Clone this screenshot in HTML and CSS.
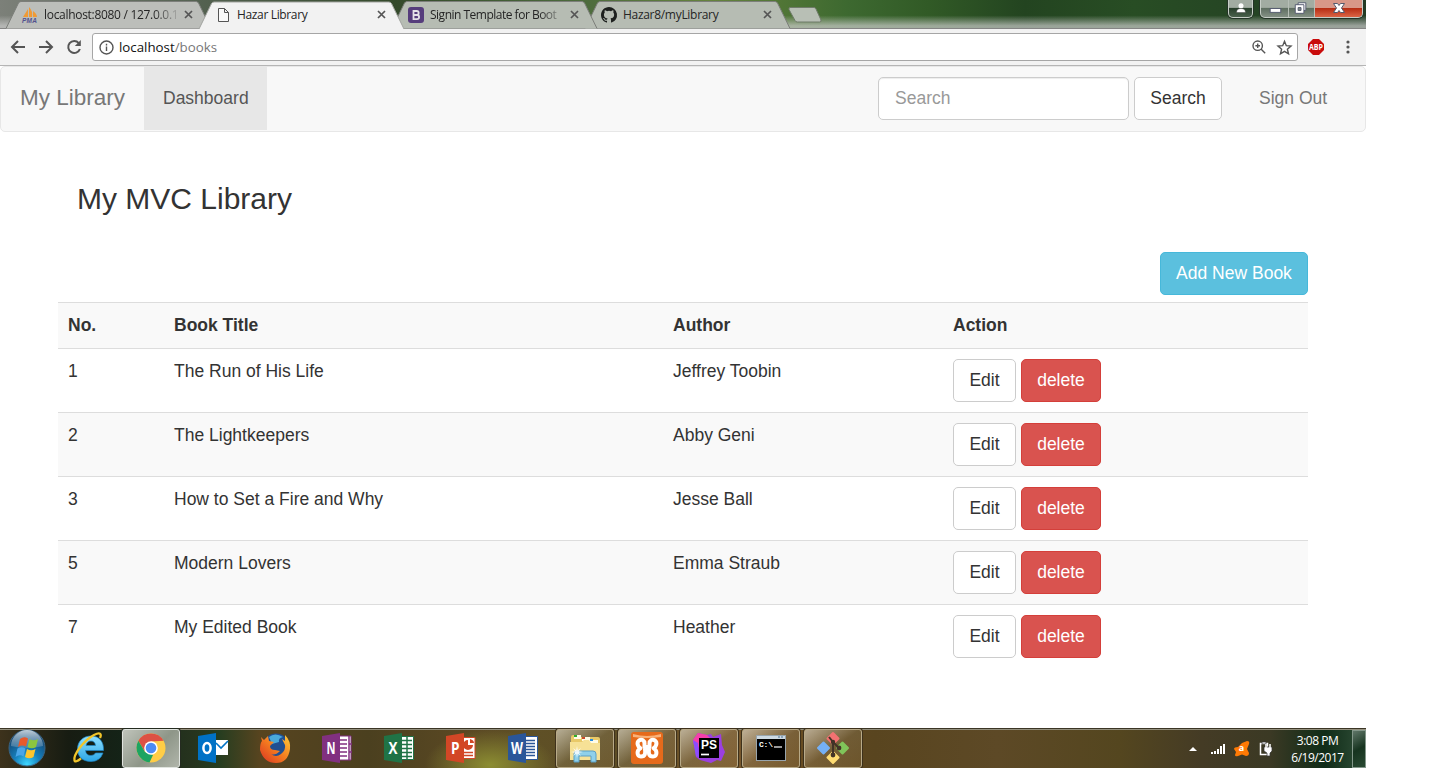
FILE: index.html
```html
<!DOCTYPE html>
<html lang="en">
<head>
<meta charset="utf-8">
<title>Hazar Library</title>
<link rel="stylesheet" href="styles.css">
</head>
<body>
<div class="desktop">
  <header class="strip">
    <div class="tabs">
      <div class="tab t1">
        <svg class="shape" viewBox="0 0 205 28"><path d="M0 28.500 12.500 3Q13.500 1.500 15 1.500H190Q191.500 1.500 192.500 3L205 28.500" /></svg>
        <svg class="fav" viewBox="0 0 16 16"><path d="M1 10 6 2v8zM7 10V0q4 4 3 10zM11 10V4q4 3 4 6z" fill="#f09a35"/><text x="0" y="15.500" class="pma" textLength="15">PMA</text></svg>
        <span class="label fade w1">localhost:8080 / 127.0.0.1</span>
        <svg class="close" viewBox="0 0 9 9"><path d="m1 1 7 7M8 1 1 8"/></svg>
      </div>
      <div class="tab active">
        <svg class="shape" viewBox="0 0 205 28"><path d="M0 28.500 12.500 3Q13.500 1.500 15 1.500H190Q191.500 1.500 192.500 3L205 28.500" /></svg>
        <svg class="fav" viewBox="0 0 16 16"><path d="M3.500 1.500h6l4 4v9h-10zM9.500 1.500v4h4" fill="#fafafa" stroke="#555"/></svg>
        <span class="label w2">Hazar Library</span>
        <svg class="close" viewBox="0 0 9 9"><path d="m1 1 7 7M8 1 1 8"/></svg>
      </div>
      <div class="tab t3">
        <svg class="shape" viewBox="0 0 205 28"><path d="M0 28.500 12.500 3Q13.500 1.500 15 1.500H190Q191.500 1.500 192.500 3L205 28.500" /></svg>
        <svg class="fav" viewBox="0 0 16 16"><rect width="16" height="16" rx="3" fill="#563d7c"/><path d="M5.500 4h3.200a2 2 0 0 1 0 4H5.500zm0 4h3.500a2.100 2.100 0 0 1 0 4.200H5.500z" fill="none" stroke="#e5e3e8" stroke-width="1.800"/></svg>
        <span class="label fade w3">Signin Template for Boot</span>
        <svg class="close" viewBox="0 0 9 9"><path d="m1 1 7 7M8 1 1 8"/></svg>
      </div>
      <div class="tab t4">
        <svg class="shape" viewBox="0 0 205 28"><path d="M0 28.500 12.500 3Q13.500 1.500 15 1.500H190Q191.500 1.500 192.500 3L205 28.500" /></svg>
        <svg class="fav" viewBox="0 0 16 16"><path fill="#1d201e" d="M8 0C3.580 0 0 3.580 0 8c0 3.540 2.290 6.530 5.470 7.590.4.070.55-.17.55-.38v-1.490c-2.010.37-2.530-.49-2.690-.94-.09-.23-.48-.94-.82-1.130-.28-.15-.68-.52-.01-.53.63-.01 1.080.58 1.230.82.72 1.210 1.870.87 2.330.66.070-.52.280-.87.510-1.070-1.780-.2-3.640-.89-3.640-3.950 0-.87.310-1.590.82-2.150-.08-.2-.36-1.020.08-2.120 0 0 .67-.21 2.200.82a7.600 7.600 0 0 1 4 0c1.530-1.040 2.200-.82 2.200-.82.44 1.100.16 1.920.08 2.120.51.56.82 1.270.82 2.150 0 3.070-1.870 3.750-3.650 3.950.29.25.54.73.54 1.480v2.200c0 .21.15.46.55.38A8 8 0 0 0 8 0z"/></svg>
        <span class="label w4">Hazar8/myLibrary</span>
        <svg class="close" viewBox="0 0 9 9"><path d="m1 1 7 7M8 1 1 8"/></svg>
      </div>
      <svg class="newtab" viewBox="0 0 34 16"><path d="M2 .500h24q1.500 0 2 1.500l5 11q.500 2-1.500 2h-22q-2 0-2.500-1.500l-6-11Q.500.500 2 .500z" fill="#b8bfb5" stroke="#6f7a69"/></svg>
    </div>
    <div class="controls">
      <div class="ctl user"><svg viewBox="0 0 24 18"><circle cx="12" cy="5.800" r="2.500" fill="#fff"/><path d="M7.500 12.500q0-4 4.500-4t4.500 4z" fill="#fff" stroke="#333" stroke-width=".4"/></svg></div>
      <div class="ctl group">
        <svg class="min" viewBox="0 0 28 18"><rect x="9.500" y="8.500" width="11" height="4" fill="#fff" stroke="#555c70"/></svg>
        <svg class="max" viewBox="0 0 26 18"><path d="M9.500 2.500h8v8h-8z" fill="#fff" stroke="#555c70"/><path d="M6.500 4.500h9v9h-9z" fill="#fff" stroke="#555c70"/><path d="M9.500 7.500h3v3h-3z" fill="#7d8882" stroke="#555c70"/></svg>
        <svg class="x" viewBox="0 0 48 18"><path d="M18.500 3.500h4l1.500 2 1.500-2h4l-3 4.500 3 4.500h-4l-1.500-2-1.500 2h-4l3-4.500z" fill="#fff" stroke="#54596c"/></svg>
      </div>
    </div>
  </header>

  <div class="toolbar">
    <svg class="nav-ic" viewBox="0 0 16 16"><path d="M15 8H2M8 2 2 8l6 6"/></svg>
    <svg class="nav-ic" viewBox="0 0 16 16"><path d="M1 8h13M8 2l6 6-6 6"/></svg>
    <svg class="nav-ic" viewBox="0 0 16 16"><path d="M12.800 4.100A6 6 0 1 0 13.900 10"/><path d="M14.800 1v6h-6z" class="solid"/></svg>
    <div class="url">
      <svg class="info" viewBox="0 0 15 15"><circle cx="7.500" cy="7.500" r="6.500"/><path d="M7.500 6.500v4.500M7.500 3.700v1.700"/></svg>
      <span class="address">localhost<i>/books</i></span>
      <svg class="zoom" viewBox="0 0 14 14"><circle cx="5.700" cy="5.700" r="4.700"/><path d="m9 9 4.200 4.200M3.400 5.700H8M5.700 3.400V8"/></svg>
      <svg class="star" viewBox="0 0 15 15"><path d="m7.500 1.300 1.800 4.400 4.700.4-3.600 3.100 1.100 4.600-4-2.500-4 2.500 1.100-4.600L1 6.100l4.700-.4z"/></svg>
    </div>
    <svg class="abp" viewBox="0 0 16 16"><path d="M5 0h6l5 5v6l-5 5H5l-5-5V5z" fill="#c90b0b"/><text x="1" y="11" textLength="14" lengthAdjust="spacingAndGlyphs">ABP</text></svg>
    <svg class="dots" viewBox="0 0 4 14"><circle cx="2" cy="2" r="1.600"/><circle cx="2" cy="7" r="1.600"/><circle cx="2" cy="12" r="1.600"/></svg>
  </div>

  <main class="page">
    <nav class="navbar">
      <a class="brand">My Library</a>
      <a class="dash">Dashboard</a>
      <form class="search">
        <input type="text" placeholder="Search">
        <button type="button" class="btn">Search</button>
      </form>
      <a class="out">Sign Out</a>
    </nav>
    <section class="content">
      <h1>My MVC Library</h1>
      <div class="add"><button class="btn info-btn">Add New Book</button></div>
      <table>
        <colgroup><col class="c1"><col class="c2"><col class="c3"><col></colgroup>
        <tbody>
        <tr><th>No.</th><th>Book Title</th><th>Author</th><th>Action</th></tr>
        <tr><td>1</td><td>The Run of His Life</td><td>Jeffrey Toobin</td><td><div class="acts"><button class="btn edit">Edit</button><button class="btn danger">delete</button></div></td></tr>
        <tr><td>2</td><td>The Lightkeepers</td><td>Abby Geni</td><td><div class="acts"><button class="btn edit">Edit</button><button class="btn danger">delete</button></div></td></tr>
        <tr><td>3</td><td>How to Set a Fire and Why</td><td>Jesse Ball</td><td><div class="acts"><button class="btn edit">Edit</button><button class="btn danger">delete</button></div></td></tr>
        <tr><td>5</td><td>Modern Lovers</td><td>Emma Straub</td><td><div class="acts"><button class="btn edit">Edit</button><button class="btn danger">delete</button></div></td></tr>
        <tr><td>7</td><td>My Edited Book</td><td>Heather</td><td><div class="acts"><button class="btn edit">Edit</button><button class="btn danger">delete</button></div></td></tr>
        </tbody>
      </table>
    </section>
  </main>

  <footer class="taskbar">
    <svg class="orb" viewBox="0 0 38 38">
      <defs><radialGradient id="orb" cx=".5" cy=".95" r=".9"><stop offset="0" stop-color="#3fd8ff"/><stop offset=".4" stop-color="#1680bd"/><stop offset="1" stop-color="#123a63"/></radialGradient>
      <linearGradient id="gloss" x2="0" y2="1"><stop offset="0" stop-color="#dfe9ee" stop-opacity=".85"/><stop offset="1" stop-color="#8bacc4" stop-opacity=".35"/></linearGradient></defs>
      <circle cx="19" cy="19" r="18" fill="url(#orb)" stroke="#3b6482"/>
      <path d="M3 17a16 16 0 0 1 32 0q-16 4-32 0z" fill="url(#gloss)"/>
      <path d="M12 10q4-3 8-.5l-2 8q-4-2-8 .5z" fill="#e8592a"/><path d="M21.500 10q4 2.500 8.500 0l-2 8q-4 2.500-8.500 0z" fill="#8cc63f"/><path d="M9.500 19.500q4-2.500 8 0l-2 8q-4-2.500-8 .5z" fill="#4aa5e8"/><path d="M19 20q4 2.500 8.500 0l-2 8q-4 2.500-8.500 0z" fill="#fdc52e"/>
    </svg>
    <div class="apps">
      <div class="app"><svg viewBox="0 0 32 32"><defs><linearGradient id="ie" x2="0" y2="1"><stop offset="0" stop-color="#8fe0ff"/><stop offset="1" stop-color="#2ba6e6"/></linearGradient></defs><path fill="url(#ie)" stroke="#1e85c6" stroke-width=".7" fill-rule="evenodd" d="M30.500 18.500H12.500q.500 5 5.500 5 3 0 4.500-2.500H30Q27 29.500 18 29.500C9 29.500 4.500 24 4.500 17S9.500 4 18 4c8.500 0 13 6 12.500 14.500zM13 13.500h9.500Q22 9 18 9T13 13.500z"/><path d="M8 26.500Q2 31 1.500 28.500C0 23 10 9 21 3c6-3 8-1.500 6 3" fill="none" stroke="#f1c52a" stroke-width="2.300"/></svg></div>
      <div class="app lit"><svg viewBox="0 0 32 32"><circle cx="16" cy="16" r="14.500" fill="#ffcd46"/><path d="M3.400 8.700A14.500 14.500 0 0 1 28.600 8.700L16 9.500l-6.500 9.500z" fill="#dd5144"/><path d="M3.400 8.700 10 20l8 3-3.500 7.400A14.500 14.500 0 0 1 3.400 8.700z" fill="#1da462"/><circle cx="16" cy="16" r="6.800" fill="#fff"/><circle cx="16" cy="16" r="5.300" fill="#4c8bf5"/></svg></div>
      <div class="app"><svg viewBox="0 0 32 32"><path d="M1 4 19 1v30L1 28z" fill="#0072c6"/><path d="M19 8h12v15H19z" fill="#fff"/><path d="m19 11 5 5 7-7" fill="none" stroke="#0072c6" stroke-width="1.600"/><ellipse cx="10" cy="16" rx="3.600" ry="4.900" fill="none" stroke="#fff" stroke-width="2.500"/></svg></div>
      <div class="app"><svg viewBox="0 0 32 32"><defs><linearGradient id="ff" x1="1" x2="0" y2="1"><stop offset="0" stop-color="#ffce3a"/><stop offset=".5" stop-color="#f47b20"/><stop offset="1" stop-color="#d83122"/></linearGradient></defs><circle cx="17" cy="15" r="13.500" fill="#214f91"/><path d="M10 5q6-5 14 0-5 1-4 5l-7 2z" fill="#4aa9d9"/><path d="m2 5 3 3 4-4 1 5 5 1-4 4q0 4 5 4l5 1q-5 5-9 3 5 4 10 0 5-4 4-9l-3-6 3 2V3q6 6 5 14-2 14-14 14T1 18Q1 11 3 9z" fill="url(#ff)"/></svg></div>
      <div class="app"><svg viewBox="0 0 32 32"><path d="M18 4h12v24H18z" fill="#fff" stroke="#813080"/><path d="M18 8h8M18 12h8M18 16h8M18 20h8M18 24h8M28 4v24M28 12h3M28 20h3" stroke="#813080" stroke-width="1.500"/><path d="M1 4 19 1v30L1 28z" fill="#813080"/><text class="office" x="5.500" y="21.500" textLength="9" lengthAdjust="spacingAndGlyphs">N</text></svg></div>
      <div class="app"><svg viewBox="0 0 32 32"><path d="M18 4.500h12.500v23H18z" fill="#fff" stroke="#207346"/><path d="M18 8.500h11M18 12.500h11M18 16.500h11M18 20.500h11M18 24.500h11M24 5v22" stroke="#207346" stroke-width="1.500"/><path d="M1 4 19 1v30L1 28z" fill="#207346"/><text class="office" x="5.500" y="21.500" textLength="9" lengthAdjust="spacingAndGlyphs">X</text></svg></div>
      <div class="app"><svg viewBox="0 0 32 32"><path d="M18 5.500h12v21H18z" fill="#fff" stroke="#d24726"/><path d="M23 8a5 5 0 1 0 5 5h-5zM25 7v4h4q0-3-4-4z" fill="#d24726"/><path d="M19 20.500h9M19 23.500h9" stroke="#d24726" stroke-width="1.500"/><path d="M1 4 19 1v30L1 28z" fill="#d24726"/><text class="office" x="6" y="21.500" textLength="8.500" lengthAdjust="spacingAndGlyphs">P</text></svg></div>
      <div class="app"><svg viewBox="0 0 32 32"><path d="M18 4.500h12.500v23H18z" fill="#fff" stroke="#2a5699"/><path d="M18 8.500h10M18 11.500h10M18 14.500h10M18 17.500h10M18 20.500h10M18 23.500h10" stroke="#2a5699" stroke-width="1.500"/><path d="M1 4 19 1v30L1 28z" fill="#2a5699"/><text class="office" x="4" y="21.500" textLength="12" lengthAdjust="spacingAndGlyphs">W</text></svg></div>
      <div class="app open"><svg viewBox="0 0 32 32"><path d="M2 28V5q0-2 2-2h7l1 2h17q2 0 2 2v21z" fill="#e9c968"/><path d="M5 3h7v4H5zM13 5h8v4h-8zM20 8h9v3h-9z" fill="#fffbe6"/><path d="M5 3h3v2H5z" fill="#2fad2b"/><path d="M13 5h3v2h-3z" fill="#cc4b2d"/><path d="M21 7h3v2h-3z" fill="#2b8ee0"/><path d="M1 10h12l2-2h5l2 3h9v17H1z" fill="#f6e196"/><path d="M5 30V22q0-3 3-3h16q3 0 3 3v8h-5v-6H10v6z" fill="#8fd0ea" stroke="#5a9fc4"/><path d="m8 14 .8 4.200L12 16l-2.200 3.200L14 20l-4.200.8L12 24l-3.200-2.200L8 26l-.8-4.200L4 24l2.200-3.200L2 20l4.200-.8L4 16l3.200 2.200z" fill="#fff" opacity=".85"/></svg></div>
      <div class="app open"><svg viewBox="0 0 32 32"><rect width="32" height="32" rx="3" fill="#e66a1b"/><path d="M2 2q14 4 28 0v3q-14 2-28 0z" fill="#f9b27a"/><path d="M8 8.500C5.500 10.500 6.500 14.500 9.500 16.200 5.500 18 5.500 24.500 10 24.500c4.500 0 4.500-3.500 4-7.500h4c-.5 4-.5 7.500 4 7.500 4.500 0 4.500-6.500.5-8.300 3-1.700 4-5.700 1.500-7.700-3-2-5.500 0-5.500 3v3.500h-5v-3.500c0-3-2.500-5-5.500-3z" fill="none" stroke="#fff" stroke-width="4" stroke-linejoin="round"/></svg></div>
      <div class="app open"><svg viewBox="0 0 32 32"><path d="M0 8 5 1l9 2 4-1 2 3 8-3 1 11 3 7-4 9-4-1-6 3-11-3-4-3z" fill="#9b3fe0"/><path d="m0 8 5-7 9 2 4 4-12 7-3 7z" fill="#f63faa"/><path d="m0 8 5 3 1 14-3-1z" fill="#8c4dff"/><rect x="6" y="6" width="20" height="20"/><text class="ps" x="8" y="16.500" textLength="16">PS</text><path d="M8 22.500h8" stroke="#fff" stroke-width="1.700"/></svg></div>
      <div class="app open"><svg viewBox="0 0 32 32"><rect x="1.500" y="3.500" width="29" height="25" fill="#000" stroke="#98a4ac"/><path d="M2 4h28v3H2z" fill="#cdd9e2"/><path d="M23 5h2m1 0h2" stroke="#4a7092"/><text class="cmd" x="4" y="15" textLength="14">C:\</text><path d="M19 15h8" stroke="#fff" stroke-width="1.200"/></svg></div>
      <div class="app open"><svg viewBox="0 0 32 32"><g stroke-linejoin="round" stroke-width="2"><path d="m16 1 5.500 5.500L16 12l-5.500-5.500z" fill="#f27272" stroke="#f27272"/><path d="m25.500 10.500 5.500 5.500-5.500 5.500L20 16z" fill="#80c55a" stroke="#80c55a"/><path d="m16 20 5.500 5.500L16 31l-5.500-5.500z" fill="#ffdc72" stroke="#ffdc72"/><path d="m6.500 10.500L12 16l-5.500 5.500L1 16z" fill="#75b0f5" stroke="#75b0f5"/></g><path d="m12 5 4 5v13m0-13 6 6" fill="none" stroke="#423327" stroke-width="2"/><g fill="#423327"><circle cx="16" cy="10" r="2.200"/><circle cx="22" cy="16" r="2.400"/><circle cx="16" cy="23" r="2.400"/></g></svg></div>
    </div>
    <div class="tray">
      <svg class="arrow" viewBox="0 0 8 5"><path d="m0 5 4-4 4 4z" fill="#fff"/></svg>
      <svg class="signal" viewBox="0 0 16 12"><path d="M1 9h2v2H1zM4 8h2v3H4zM7 6h2v5H7zM10 3h2v8h-2zM13 1h2v10h-2z" fill="#fff"/></svg>
      <svg class="avast" viewBox="0 0 16 16"><path d="M8 2 13 0q3 0 2 3l-2 5 2 4q0 3-3 3l-4-1.500L4 15q-3 1-3-1l1-3-2-3q0-2 4-2z" fill="#ff7a05"/><text x="4.700" y="10">a</text></svg>
      <svg class="power" viewBox="0 0 16 16"><path d="M2.500 2.500h7v11h-7z" fill="none" stroke="#fff" stroke-width="1.500"/><path d="M4 1h4v2H4zM6 6h8v4l-2 2v3h-3v-3l-3-2z" fill="#fff" stroke="#333" stroke-width=".7"/><path d="M8 3v4M12 3v4" stroke="#fff" stroke-width="1.500"/></svg>
      <div class="clock"><span class="time">3:08 PM</span><span>6/19/2017</span></div>
      <div class="show"></div>
    </div>
  </footer>
</div>
</body>
</html>
```

FILE: styles.css
```css
* { box-sizing: border-box; }
body { margin: 0; background: #fff; font: 17.5px/25px "Liberation Sans", Arial, sans-serif; color: #333; overflow: hidden; }
svg { display: block; flex: none; overflow: visible; }
.desktop { width: 1366px; height: 768px; display: flex; flex-direction: column; }

/* Tab strip */
.strip { height: 29px; flex: none; display: flex; justify-content: space-between; border-bottom: 1px solid #858585;
  background: linear-gradient(180deg, transparent 55%, rgba(205,205,205,.7) 92%), linear-gradient(90deg, #7c8079, #536150 15%, #344a2b 29%, #4d6c3d 43%, #66833d 52%, #3d6930 62%, #315a26 68%, #234420 75%, #284d24 83%, #223c24); }
.tabs { display: flex; padding-left: 6px; height: 29px; }
.tab { position: relative; width: 205px; height: 29px; margin-right: -12px; padding: 0 15px 0 16px; display: flex; align-items: center; font: 12px/16px "Open Sans", sans-serif; color: #252525; }
.tab > * { position: relative; }
.tab .shape { position: absolute; left: 0; top: 0; width: 205px; height: 28px; fill: #bcbeba; stroke: #7c7e7a; }
.t1 { z-index: 2; } .active { z-index: 4; } .t3 { z-index: 3; } .t4 { z-index: 1; }
.active .shape { fill: #f2f2f2; stroke: #a2a4a0; height: 29px; }
.t3 .shape, .t4 .shape { fill: #b6bcb3; }
.fav { width: 16px; height: 16px; margin-right: 6px; }
.pma { font: italic bold 6.5px "Liberation Sans", sans-serif; fill: #52528e; }
.label { white-space: nowrap; overflow: hidden; width: 133px; letter-spacing: -.35px; }
.w1, .w4 { letter-spacing: -.3px; }
.w3 { letter-spacing: -.5px; }
.fade { -webkit-mask-image: linear-gradient(90deg, #000 82%, rgba(0,0,0,.15)); mask-image: linear-gradient(90deg, #000 82%, rgba(0,0,0,.15)); }
.close { width: 9px; height: 9px; margin-left: 7px; fill: none; stroke: #555; stroke-width: 1.7; }
.newtab { width: 34px; height: 16px; margin: 7px 0 0 10px; }
.controls { display: flex; padding-right: 3px; }
.ctl { height: 18px; border: 1px solid #c7cec7; border-top: 0; border-radius: 0 0 5px 5px; box-shadow: 0 0 0 1px #243427; overflow: hidden; background: linear-gradient(#a2aca2 0 44%, #263d29 45%, #49604b); }
.user { width: 25px; margin-right: 7px; }
.group { width: 103px; display: flex; background: linear-gradient(#a2aca2 0 44%, #5c6c5e 45%, #839084); }
.min { width: 28px; border-right: 1px solid #b6beb6; }
.max { width: 26px; border-right: 1px solid #b6beb6; }
.x { width: 48px; background: linear-gradient(#d89788 0 43%, #b52b12 45%, #df6b4b); }
.ctl svg { height: 18px; }

/* Toolbar */
.toolbar { height: 37px; flex: none; display: flex; align-items: center; background: #f2f2f2; border-bottom: 1px solid #b5b5b5; padding-left: 10px; }
.nav-ic { width: 16px; height: 16px; margin-right: 12px; fill: none; stroke: #555; stroke-width: 2; }
.nav-ic .solid { fill: #555; stroke: none; }
.url { width: 1206px; height: 28px; margin-left: -2px; display: flex; align-items: center; border: 1px solid #a6a6a6; border-radius: 3px; background: #fff; padding: 0 5px 0 6px; }
.url svg { fill: none; stroke: #555; stroke-width: 1.4; }
.info { width: 15px; height: 15px; }
.address { flex: 1; margin-left: 5px; font: 13.3px/18px "Open Sans", sans-serif; color: #111; }
.address i { font-style: normal; color: #777; }
.zoom { width: 14px; height: 14px; }
.star { width: 15px; height: 15px; margin-left: 11px; }
.abp { width: 16px; height: 16px; margin-left: 10px; }
.abp text { font: bold 8px "Open Sans", sans-serif; fill: #fff; }
.dots { width: 4px; height: 14px; margin-left: 22px; fill: #555; }

/* Page */
.page { height: 662px; flex: none; }
.navbar { height: 66px; display: flex; align-items: center; padding-bottom: 1px; background: #f8f8f8; border: 1px solid #e7e7e7; border-radius: 5px; color: #777; }
.brand { width: 143px; padding: 0 0 2px 19px; font-size: 22.5px; }
.dash { width: 123px; height: 63px; padding: 19px 0 0 19px; background: #e7e7e7; color: #555; }
.search { display: flex; gap: 5px; margin-left: auto; }
.search input { width: 251px; height: 43px; padding: 0 16px; border: 1px solid #ccc; border-radius: 5px; background: #fff; font: inherit; box-shadow: inset 0 1px 1px rgba(0,0,0,.075); }
.search input::placeholder { color: #999; opacity: 1; }
.out { width: 143px; padding-left: 37px; }
.btn { height: 43px; padding: 0; border: 1px solid #ccc; border-radius: 5px; background: #fff; color: #333; font: inherit; white-space: nowrap; }
.search .btn { width: 88px; }
.content { margin: 0 58px; }
h1 { margin: 0; padding: 50px 0 37px 19px; font-size: 30px; line-height: 33px; font-weight: 400; }
.add { display: flex; justify-content: flex-end; height: 50px; }
.info-btn { width: 148px; background: #5bc0de; border-color: #46b8da; color: #fff; }
table { width: 1250px; table-layout: fixed; border-collapse: separate; border-spacing: 0; }
.c1 { width: 106px; } .c2 { width: 499px; } .c3 { width: 280px; }
th, td { padding: 10px; border-top: 1px solid #ddd; text-align: left; vertical-align: top; }
tr:nth-child(odd) { background: #f9f9f9; }
.acts { display: flex; gap: 5px; }
.edit { width: 63px; }
.danger { width: 80px; background: #d9534f; border-color: #d43f3a; color: #fff; }

/* Taskbar */
.taskbar { height: 40px; flex: none; display: flex; border-top: 1px solid #3b3525; box-shadow: inset 0 1px #94907e;
  background: radial-gradient(ellipse 65px 35px at 490px 36px, #8c8d32, transparent), linear-gradient(90deg, #3d321c, #171c12 5%, #142317 9%, #26331e 14%, #253d20 16%, #57441f 19%, #4b401f 27%, #5a4823 34%, #5f5026 39%, #5d4d25 45%, #77572c 54%, #63491f 60%, #59451f 64%, #5d4926 73%, #54461f 82%, #443b25 88%, #3b3924 93%, #102c18 97%, #315039); }
.orb { width: 38px; height: 38px; margin: 0 14px 0 8px; }
.apps { display: flex; gap: 4px; }
.app { width: 58px; height: 39px; display: flex; align-items: center; justify-content: center; border-radius: 3px; }
.app svg { width: 32px; height: 32px; margin-top: -1px; }
.lit { border: 1px solid #e0e4df; background: linear-gradient(135deg, #c0c4bb, #8e9688 55%, #b0b5aa); box-shadow: 0 0 0 1px #242b20; }
.open { border: 1px solid #b8aa88; background: linear-gradient(145deg, rgba(235,230,215,.62), rgba(180,165,130,.22) 50%, rgba(160,130,80,.25)); box-shadow: 0 0 0 1px #3e311b; }
.office { font: bold 16px "Open Sans", sans-serif; fill: #fff; }
.ps { font: bold 12px "Liberation Sans", sans-serif; fill: #fff; }
.cmd { font: bold 8px "Liberation Mono", monospace; fill: #fff; }
.tray { margin-left: auto; display: flex; align-items: center; color: #fff; }
.arrow { width: 8px; height: 5px; margin-right: 13px; }
.signal { width: 16px; height: 12px; margin-right: 8px; }
.avast { width: 16px; height: 16px; margin-right: 8px; }
.avast text { font: bold 9px "Open Sans", sans-serif; fill: #fff; }
.power { width: 16px; height: 16px; }
.clock { width: 78px; padding-left: 9px; display: flex; flex-direction: column; align-items: center; font: 12px/17px "Open Sans", sans-serif; letter-spacing: -.5px; }
.show { width: 14px; height: 38px; border: 1px solid #83978a; background: linear-gradient(150deg, #5f7668, #173420 50%, #294932); }
```
